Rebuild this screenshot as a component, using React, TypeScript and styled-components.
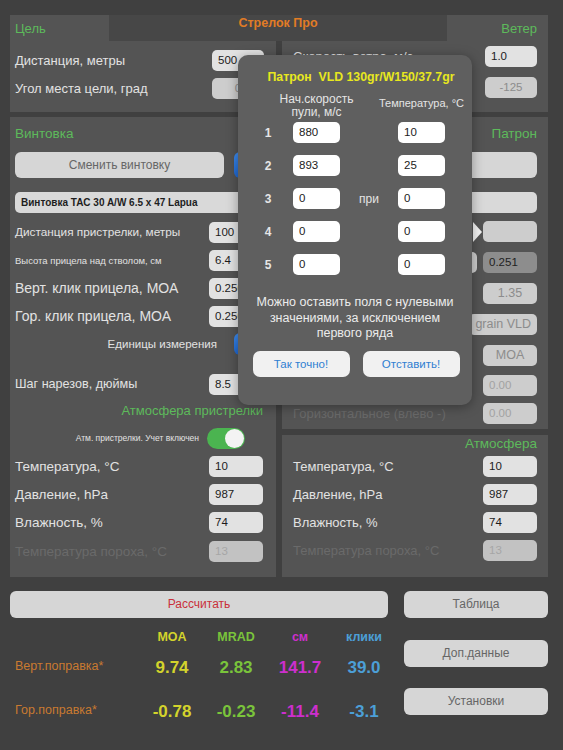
import React from 'react';
import styled, { createGlobalStyle } from 'styled-components';

type Tone = 'input' | 'muted' | 'mutedLeft' | 'dark' | 'dim' | 'white';

const tones: Record<Tone, { bg: string; fg: string; align: string }> = {
  input: { bg: '#e2e2e2', fg: '#1c1c1c', align: 'left' },
  muted: { bg: '#cdcdcd', fg: '#8c8c8c', align: 'center' },
  mutedLeft: { bg: '#cdcdcd', fg: '#a2a2a2', align: 'left' },
  dark: { bg: '#8d8d8d', fg: '#1f1f1f', align: 'left' },
  dim: { bg: '#c2c2c2', fg: '#a6a6a6', align: 'left' },
  white: { bg: '#ffffff', fg: '#1c1c1c', align: 'left' },
};

const GlobalStyle = createGlobalStyle`
  html, body {
    margin: 0;
    padding: 0;
    background: #404040;
  }
  * {
    box-sizing: border-box;
  }
`;

const Screen = styled.div`
  position: relative;
  width: 563px;
  height: 750px;
  overflow: hidden;
  background: #404040;
  padding: 15px 15px 0 10px;
  font-family: "Liberation Sans", Arial, sans-serif;
`;

// верхняя полоса с вкладками
const TabBar = styled.div`
  display: grid;
  grid-template-columns: 99px 1fr 101px;
  height: 26px;
  background: #474747;
`;

const Tab = styled.div<{ $right?: boolean }>`
  background: #545454;
  color: #5dba5b;
  font-size: 13px;
  line-height: 27px;
  padding: 0 11px 0 5px;
  text-align: ${p => (p.$right ? 'right' : 'left')};
`;

const AppTitle = styled.div`
  color: #e27c25;
  font-weight: bold;
  font-size: 12.5px;
  line-height: 16px;
  text-align: center;
`;

const Columns = styled.div<{ $top?: number }>`
  display: grid;
  grid-template-columns: 266px 266px;
  column-gap: 6px;
  margin-top: ${p => p.$top ?? 0}px;
`;

const Stack = styled.div`
  display: flex;
  flex-direction: column;
  gap: 6px;
`;

const Panel = styled.section<{ $h: number; $pad: string }>`
  height: ${p => p.$h}px;
  background: #545454;
  padding: ${p => p.$pad};
  display: flex;
  flex-direction: column;
`;

const SectionTitle = styled.div<{ $right?: boolean; $h?: number; $size?: number }>`
  color: #5dba5b;
  font-size: ${p => p.$size ?? 13.5}px;
  height: ${p => p.$h ?? 20}px;
  line-height: ${p => p.$h ?? 20}px;
  text-align: ${p => (p.$right ? 'right' : 'left')};
  flex-shrink: 0;
`;

const Row = styled.div<{ $h?: number; $end?: boolean; $gap?: number; $top?: number }>`
  display: flex;
  align-items: center;
  justify-content: ${p => (p.$end ? 'flex-end' : 'space-between')};
  gap: ${p => p.$gap ?? 6}px;
  height: ${p => p.$h ?? 28}px;
  margin-top: ${p => p.$top ?? 0}px;
  flex-shrink: 0;
`;

const Label = styled.span<{ $size?: number; $dim?: boolean }>`
  font-size: ${p => p.$size ?? 13}px;
  color: ${p => (p.$dim ? '#6a6a6a' : '#e2e2e2')};
  white-space: nowrap;
`;

const Field = styled.div<{ $tone?: Tone; $w?: number; $align?: string; $size?: number }>`
  position: relative;
  flex-shrink: 0;
  width: ${p => p.$w ?? 54}px;
  height: 21px;
  border-radius: 5px;
  padding: 0 6px;
  font-size: ${p => p.$size ?? 11.5}px;
  line-height: 21px;
  white-space: nowrap;
  overflow: hidden;
  background: ${p => tones[p.$tone ?? 'input'].bg};
  color: ${p => tones[p.$tone ?? 'input'].fg};
  text-align: ${p => p.$align ?? tones[p.$tone ?? 'input'].align};
`;

const Pointer = styled.div`
  position: relative;
  &::before {
    content: '';
    position: absolute;
    left: -10px;
    top: 1px;
    border-top: 10px solid transparent;
    border-bottom: 10px solid transparent;
    border-left: 9px solid #f2f2f2;
  }
`;

const GreyButton = styled.div<{ $w?: number; $h?: number; $top?: number; $color?: string }>`
  width: ${p => (p.$w ? `${p.$w}px` : 'auto')};
  height: ${p => p.$h ?? 26}px;
  margin-top: ${p => p.$top ?? 0}px;
  flex-shrink: 0;
  border-radius: 6px;
  background: #d6d6d6;
  color: ${p => p.$color ?? '#666666'};
  font-size: 12px;
  line-height: ${p => p.$h ?? 26}px;
  text-align: center;
`;

const BlueBox = styled.div<{ $h: number }>`
  width: 36px;
  height: ${p => p.$h}px;
  border-radius: 6px;
  background: linear-gradient(#3d8cf0, #1f67d0);
  flex-shrink: 0;
`;

const NameBox = styled.div<{ $flush?: boolean }>`
  height: 21px;
  margin-top: 14px;
  margin-right: ${p => (p.$flush ? 0 : -7)}px;
  border-radius: 5px;
  background: #d9d9d9;
  color: #1e1e1e;
  font-size: 10px;
  font-weight: bold;
  line-height: 21px;
  padding: 0 6px;
  flex-shrink: 0;
`;

const Switch = styled.div`
  position: relative;
  width: 38px;
  height: 21px;
  border-radius: 11px;
  background: #4bb450;
  flex-shrink: 0;
  &::after {
    content: '';
    position: absolute;
    top: 1px;
    right: 1px;
    width: 19px;
    height: 19px;
    border-radius: 50%;
    background: #f3f3f3;
  }
`;

// диалог скоростей
const Dialog = styled.div`
  position: absolute;
  left: 238px;
  top: 55px;
  width: 234px;
  height: 350px;
  border-radius: 10px;
  background: #5f5f5f;
  box-shadow: 0 2px 12px rgba(0, 0, 0, 0.35);
  padding-top: 14px;
`;

const DialogTitle = styled.div`
  color: #e8e81e;
  font-weight: bold;
  font-size: 12.3px;
  line-height: 16px;
  text-align: center;
  white-space: pre;
  padding-left: 12px;
`;

const gridCols = '35px 47px 58px 47px';

const HeadGrid = styled.div`
  display: grid;
  grid-template-columns: ${gridCols};
  padding-left: 20px;
  margin-top: 8px;
  height: 29px;
`;

const ColHead = styled.div<{ $col: number; $top?: number }>`
  grid-column: ${p => p.$col};
  margin: ${p => p.$top ?? 0}px -25px 0;
  text-align: center;
  color: #e4e4e4;
  font-size: ${p => (p.$col === 2 ? 12 : 11)}px;
  line-height: 13px;
  white-space: nowrap;
`;

const SpeedGrid = styled.div`
  display: grid;
  grid-template-columns: ${gridCols};
  grid-auto-rows: 21px;
  row-gap: 12px;
  padding-left: 20px;
  align-items: center;
`;

const RowNum = styled.div`
  width: 20px;
  text-align: center;
  color: #e6e6e6;
  font-weight: bold;
  font-size: 12px;
`;

const AtText = styled.div`
  text-align: center;
  color: #e4e4e4;
  font-size: 12px;
`;

const Note = styled.p`
  margin: 20px 0 0;
  padding: 0 10px;
  color: #ececec;
  font-size: 12.5px;
  line-height: 15.5px;
  text-align: center;
`;

const DialogButtons = styled.div`
  display: flex;
  justify-content: center;
  gap: 13px;
  margin-top: 9px;
  padding-left: 2px;
`;

const DialogButton = styled.div`
  width: 97px;
  height: 26px;
  border-radius: 7px;
  background: #f1f1f1;
  color: #2f7fd2;
  font-size: 11.5px;
  line-height: 26px;
  text-align: center;
`;

// нижняя часть
const Bottom = styled.div`
  display: grid;
  grid-template-columns: 378px 144px;
  column-gap: 16px;
  margin-top: 14px;
`;

const SideButtons = styled.div`
  display: flex;
  flex-direction: column;
  gap: 21.5px;
`;

const Results = styled.div`
  display: grid;
  grid-template-columns: 130px repeat(4, 64px);
  grid-template-rows: 14px 40px 40px;
  row-gap: 4px;
  margin-top: 12px;
  align-items: center;
`;

const ResultLabel = styled.div`
  padding: 0 0 5px 5px;
  color: #c97a30;
  font-size: 12.5px;
`;

const UnitHead = styled.div<{ $color: string }>`
  text-align: center;
  color: ${p => p.$color};
  font-weight: bold;
  font-size: 12.5px;
`;

const Value = styled.div<{ $color: string }>`
  text-align: center;
  color: ${p => p.$color};
  font-weight: bold;
  font-size: 17px;
`;

const units = [
  { name: 'MOA', color: '#d3d32c', v: '9.74', h: '-0.78' },
  { name: 'MRAD', color: '#7ac43b', v: '2.83', h: '-0.23' },
  { name: 'см', color: '#cd2fcd', v: '141.7', h: '-11.4' },
  { name: 'клики', color: '#4c9fd7', v: '39.0', h: '-3.1' },
];

const speeds = [
  ['880', '10'],
  ['893', '25'],
  ['0', '0'],
  ['0', '0'],
  ['0', '0'],
];

const atmosphere = [
  { label: 'Температура, °C', value: '10' },
  { label: 'Давление, hPa', value: '987' },
  { label: 'Влажность, %', value: '74' },
];

const App: React.FC = () => {
  return (
    <Screen>
      <GlobalStyle />

      <TabBar>
        <Tab>Цель</Tab>
        <AppTitle>Стрелок Про</AppTitle>
        <Tab $right>Ветер</Tab>
      </TabBar>

      <Columns>
        <Panel $h={71} $pad="5px 12px 0 5px">
          <Row>
            <Label>Дистанция, метры</Label>
            <Field $w={52}>500</Field>
          </Row>
          <Row>
            <Label>Угол места цели, град</Label>
            <Field $w={52} $tone="muted">0</Field>
          </Row>
        </Panel>
        <Panel $h={71} $pad="1px 11px 0 11px">
          <Row>
            <Label>Скорость ветра, м/с</Label>
            <Field $w={52}>1.0</Field>
          </Row>
          <Row $h={34} $end>
            <Field $w={52} $tone="muted">-125</Field>
          </Row>
        </Panel>
      </Columns>

      <Columns $top={5}>
        <Panel $h={460} $pad="7px 13px 0 5px">
          <SectionTitle>Винтовка</SectionTitle>
          <Row $h={26} $top={8} $gap={10} style={{ marginRight: -7 }}>
            <GreyButton $w={209}>Сменить винтовку</GreyButton>
            <BlueBox $h={26} />
          </Row>
          <NameBox>Винтовка TAC 30 A/W 6.5 x 47 Lapua</NameBox>
          <Row $top={5}>
            <Label $size={11.8}>Дистанция пристрелки, метры</Label>
            <Field>100</Field>
          </Row>
          <Row>
            <Label $size={9.5}>Высота прицела над стволом, см</Label>
            <Field>6.4</Field>
          </Row>
          <Row>
            <Label $size={14}>Верт. клик прицела, МОА</Label>
            <Field>0.250</Field>
          </Row>
          <Row>
            <Label $size={14}>Гор. клик прицела, МОА</Label>
            <Field>0.250</Field>
          </Row>
          <Row $end $gap={17} style={{ marginRight: -7 }}>
            <Label $size={11.5}>Единицы измерения</Label>
            <BlueBox $h={22} />
          </Row>
          <Row $top={12}>
            <Label $size={12.6}>Шаг нарезов, дюймы</Label>
            <Field>8.5</Field>
          </Row>
          <SectionTitle $right $h={26} $size={13}>Атмосфера пристрелки</SectionTitle>
          <Row $end $gap={8} style={{ paddingRight: 18 }}>
            <Label $size={8.5}>Атм. пристрелки. Учет включен</Label>
            <Switch />
          </Row>
          {atmosphere.map(a => (
            <Row key={a.label}>
              <Label $size={13.5}>{a.label}</Label>
              <Field>{a.value}</Field>
            </Row>
          ))}
          <Row $h={30}>
            <Label $size={13.5} $dim>Температура пороха, °C</Label>
            <Field $tone="dim">13</Field>
          </Row>
        </Panel>

        <Stack>
          <Panel $h={312} $pad="7px 11px 0 11px">
            <SectionTitle $right>Патрон</SectionTitle>
            <GreyButton $top={8} />
            <NameBox $flush />
            <Row $h={31} $top={3} $end>
              <Pointer>
                <Field $tone="muted" />
              </Pointer>
            </Row>
            <Row $h={31} $end>
              <Field $w={50} $tone="muted" />
              <Field $tone="dark">0.251</Field>
            </Row>
            <Row $h={31} $end>
              <Field $tone="muted" $size={12.5}>1.35</Field>
            </Row>
            <Row $h={31} $end>
              <Field $w={68} $tone="muted" $align="right" $size={12.5}>grain VLD</Field>
            </Row>
            <Row $h={31} $end>
              <Field $tone="muted" $size={12.5}>MOA</Field>
            </Row>
            <Row>
              <Label $dim>Вертикальное (вверх +)</Label>
              <Field $tone="mutedLeft">0.00</Field>
            </Row>
            <Row>
              <Label $dim>Горизонтальное (влево -)</Label>
              <Field $tone="mutedLeft">0.00</Field>
            </Row>
          </Panel>

          <Panel $h={142} $pad="0 11px 0 11px">
            <SectionTitle $right $h={17}>Атмосфера</SectionTitle>
            {atmosphere.map(a => (
              <Row key={a.label}>
                <Label>{a.label}</Label>
                <Field>{a.value}</Field>
              </Row>
            ))}
            <Row>
              <Label $dim>Температура пороха, °C</Label>
              <Field $tone="dim">13</Field>
            </Row>
          </Panel>
        </Stack>
      </Columns>

      <Bottom>
        <div>
          <GreyButton $h={27} $color="#c9303a">Рассчитать</GreyButton>
          <Results>
            <div />
            {units.map(u => (
              <UnitHead key={u.name} $color={u.color}>{u.name}</UnitHead>
            ))}
            <ResultLabel>Верт.поправка*</ResultLabel>
            {units.map(u => (
              <Value key={u.name} $color={u.color}>{u.v}</Value>
            ))}
            <ResultLabel>Гор.поправка*</ResultLabel>
            {units.map(u => (
              <Value key={u.name} $color={u.color}>{u.h}</Value>
            ))}
          </Results>
        </div>
        <SideButtons>
          <GreyButton $h={27}>Таблица</GreyButton>
          <GreyButton $h={27}>Доп.данные</GreyButton>
          <GreyButton $h={27}>Установки</GreyButton>
        </SideButtons>
      </Bottom>

      <Dialog>
        <DialogTitle>{'Патрон  VLD 130gr/W150/37.7gr'}</DialogTitle>
        <HeadGrid>
          <ColHead $col={2}>
            Нач.скорость
            <br />
            пули, м/с
          </ColHead>
          <ColHead $col={4} $top={4}>Температура, °C</ColHead>
        </HeadGrid>
        <SpeedGrid>
          {speeds.map(([v, t], i) => (
            <React.Fragment key={i}>
              <RowNum>{i + 1}</RowNum>
              <Field $w={47} $tone="white">{v}</Field>
              <AtText>{i === 2 ? 'при' : ''}</AtText>
              <Field $w={47} $tone="white">{t}</Field>
            </React.Fragment>
          ))}
        </SpeedGrid>
        <Note>
          Можно оставить поля с нулевыми значениями, за исключением первого ряда
        </Note>
        <DialogButtons>
          <DialogButton>Так точно!</DialogButton>
          <DialogButton>Отставить!</DialogButton>
        </DialogButtons>
      </Dialog>
    </Screen>
  );
};

export default App;
